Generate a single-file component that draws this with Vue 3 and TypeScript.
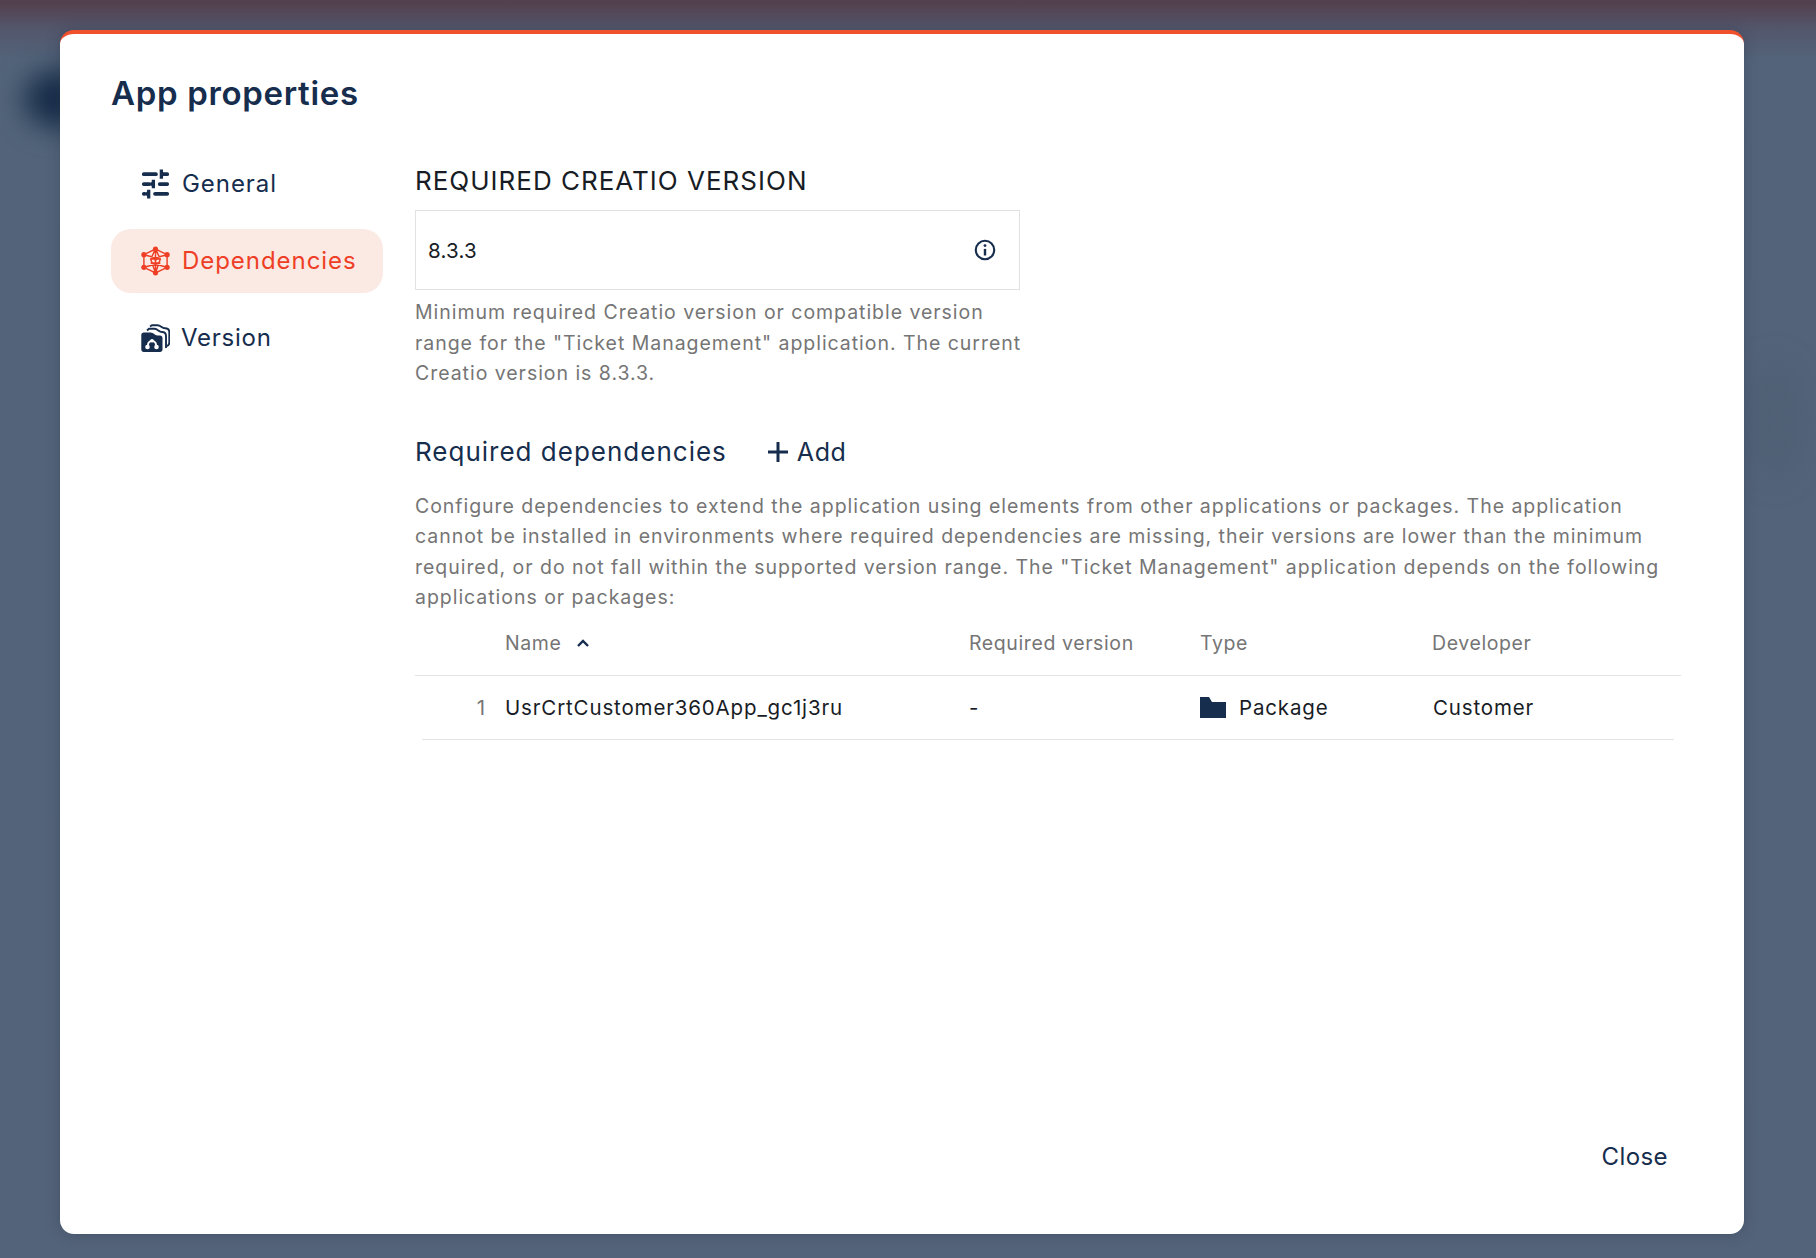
<script setup lang="ts">
interface Row { num: number; name: string; version: string; type: string; developer: string }
const rows: Row[] = [{ num: 1, name: 'UsrCrtCustomer360App_gc1j3ru', version: '-', type: 'Package', developer: 'Customer' }]
</script>

<template>
  <div class="page">
    <div class="blob"></div>
    <div class="blob2"></div>
    <section class="modal">
      <h1 class="title">App properties</h1>
      <div class="body">
        <nav class="nav">
          <a class="nav-item">
            <svg class="nav-icon" viewBox="0 0 29 32" fill="none" stroke="#162d4d" stroke-width="4" stroke-linecap="round">
              <path d="M2 5.500H15M24 5.500H27M2 16H8M19 16H27M2 26.500H3M14 26.500H27" />
              <path d="M19 0.500H22.500V3L25 5.500L22.500 8V10.500H19ZM14 11.500H10.500V13.500L8 16L10.500 18.500V20.500H14ZM9 22H5.500V24L3 26.500L5.500 29V31.500H9Z" fill="#162d4d" stroke="none" />
            </svg>
            <span class="nav-label">General</span>
          </a>
          <a class="nav-item active">
            <svg class="nav-icon" viewBox="0 0 30 30" fill="none" stroke="#ee3f26" stroke-width="1.500">
              <path d="M15 2.600L10 13L15 27.400L20 13ZM3 8.500L20 13M27 8.500L10 13M3 21.500L20 17M27 21.500L10 17M15 2.600V27.400M10 13H20M10 17H20M3 8.500L15 2.600L27 8.500V21.500L15 27.400L3 21.500Z" />
              <g fill="#ee3f26" stroke="none">
                <circle cx="15" cy="2.800" r="2.700" /><circle cx="27" cy="8.500" r="2.700" /><circle cx="27" cy="21.500" r="2.700" />
                <circle cx="15" cy="27.200" r="2.700" /><circle cx="3" cy="21.500" r="2.700" /><circle cx="3" cy="8.500" r="2.700" />
                <circle cx="15" cy="13" r="1.700" />
              </g>
            </svg>
            <span class="nav-label">Dependencies</span>
          </a>
          <a class="nav-item">
            <svg class="nav-icon" viewBox="0 0 29 28" fill="none">
              <path d="M9 2.500L11 1.200H16.500C20 1.200 20.500 4.200 24 4.200C27 4.200 28.300 5.500 28.300 8V18.500C28.300 20.500 27.500 21.500 26 22" stroke="#162d4d" stroke-width="1.900" />
              <path d="M6 6.500L8 4.800H13.500C17 4.800 17.500 8 21 8C23.800 8 25 9.500 25 12V24" stroke="#162d4d" stroke-width="1.900" />
              <path d="M0.300 11C0.300 9.500 1.300 8.500 2.800 8.500H9.500C13 8.500 13.500 11.500 16.500 11.500H19C20.500 11.500 21.500 12.500 21.500 14V25.500C21.500 27 20.500 28 19 28H2.800C1.300 28 0.300 27 0.300 25.500Z" fill="#162d4d" />
              <path d="M7 21A4 4 0 0 1 15 21" stroke="#fff" stroke-width="2" />
              <circle cx="6.500" cy="23" r="2.300" fill="#fff" /><circle cx="15.500" cy="23" r="2.300" fill="#fff" />
              <circle cx="11" cy="16.800" r="1.800" fill="#fff" />
            </svg>
            <span class="nav-label version-label">Version</span>
          </a>
        </nav>

        <main class="content">
          <h2 class="req-title">REQUIRED CREATIO VERSION</h2>
          <div class="field">
            <span class="field-value">8.3.3</span>
            <svg class="info" viewBox="0 0 20 20" fill="none" stroke="#162d4d">
              <circle cx="10" cy="10" r="8.400" stroke-width="1.900" />
              <path d="M10 9V15" stroke-width="2.200" />
              <circle cx="10" cy="6" r="1.300" fill="#162d4d" stroke="none" />
            </svg>
          </div>
          <p class="hint hint-narrow">Minimum required Creatio version or compatible version<br />range for the "Ticket Management" application. The current<br />Creatio version is 8.3.3.</p>

          <div class="dep-head">
            <h3 class="dep-title">Required dependencies</h3>
            <button class="add">
              <svg class="plus" viewBox="0 0 20 20" stroke="#162d4d" stroke-width="3"><path d="M10 0V20M0 10H20" /></svg>
              <span>Add</span>
            </button>
          </div>
          <p class="hint hint-wide">Configure dependencies to extend the application using elements from other applications or packages. The application<br />cannot be installed in environments where required dependencies are missing, their versions are lower than the minimum<br />required, or do not fall within the supported version range. The "Ticket Management" application depends on the following<br />applications or packages:</p>

          <div class="table">
            <div class="thead grid">
              <span></span>
              <span class="name-head">Name
                <svg class="sort" viewBox="0 0 12 8" fill="none" stroke="#162d4d" stroke-width="2.400"><path d="M1 7L6 2L11 7" /></svg>
              </span>
              <span>Required version</span>
              <span>Type</span>
              <span>Developer</span>
            </div>
            <div v-for="r in rows" :key="r.num" class="trow grid">
              <span class="num">{{ r.num }}</span>
              <span>{{ r.name }}</span>
              <span>{{ r.version }}</span>
              <span class="type">
                <svg class="folder" viewBox="0 0 26 21"><path d="M0 0H9L12 5H26V21H0Z" fill="#162d4d" /></svg>
                {{ r.type }}
              </span>
              <span>{{ r.developer }}</span>
            </div>
          </div>
        </main>
      </div>
      <footer class="footer"><button class="close">Close</button></footer>
    </section>
  </div>
</template>

<style>
html, body { margin: 0; background: #536379; }
</style>

<style scoped>
.page {
  position: relative;
  width: 1816px;
  height: 1258px;
  box-sizing: border-box;
  padding: 30px 72px 24px 60px;
  overflow: hidden;
  background: linear-gradient(180deg, #54414f 0, #54414f 4px, #53566b 28px, #53647a 60px, #536379 100%);
  font-family: Inter, "Open Sans", sans-serif;
  color: #162d4d;
}
.blob {
  position: absolute;
  left: 24px;
  top: 70px;
  width: 70px;
  height: 58px;
  border-radius: 50%;
  background: #162c48;
  filter: blur(14px);
}
.blob2 {
  position: absolute;
  left: 1750px;
  top: 360px;
  width: 50px;
  height: 120px;
  border-radius: 50%;
  background: rgba(60, 75, 95, 0.18);
  filter: blur(16px);
}
.modal {
  position: relative;
  display: flex;
  flex-direction: column;
  height: 100%;
  box-sizing: border-box;
  background: #fff;
  border-top: 4px solid #f0512d;
  border-radius: 14px;
  box-shadow: 0 0 14px rgba(40, 50, 70, 0.35);
  padding: 0 66px 0 51px;
}
.title {
  margin: 40px 0 0;
  font-size: 33px;
  line-height: 38px;
  font-weight: 600;
  letter-spacing: 0.67px;
}
.body { display: flex; flex: 1; margin-top: 38px; min-height: 0; }
.nav { width: 272px; margin-right: 32px; display: flex; flex-direction: column; gap: 13px; padding-top: 2px; flex: none; }
.nav-item {
  display: flex;
  align-items: center;
  gap: 12px;
  height: 64px;
  padding-left: 30px;
  border-radius: 20px;
  font-size: 24px;
  letter-spacing: 0.95px;
}
.nav-item.active { background: #fbe9e4; color: #ee3f26; }
.nav-icon { width: 29px; height: 30px; flex: none; }
.nav-label { margin-bottom: 2px; }
.version-label { margin-left: -1px; letter-spacing: 0.75px; }
.content { flex: 1; min-width: 0; padding-top: 16px; }
.req-title { margin: 0; font-size: 26px; line-height: 30px; font-weight: 400; color: #181c25; letter-spacing: 1px; white-space: nowrap; }
.field {
  display: flex;
  align-items: center;
  justify-content: space-between;
  box-sizing: border-box;
  width: 605px;
  height: 80px;
  margin-top: 14px;
  padding: 0 23px 0 12px;
  border: 1px solid #e2e2e2;
  font-size: 20.500px;
  letter-spacing: 0.2px;
  color: #181c25;
}
.info { width: 22px; height: 22px; }
.hint { margin: 0; font-size: 19.500px; line-height: 30.500px; color: #757575; letter-spacing: 0.96px; white-space: nowrap; }
.hint-narrow { margin-top: 7px; }
.dep-head { display: flex; align-items: center; gap: 41px; margin-top: 47px; }
.dep-title { margin: 0; font-size: 26px; line-height: 32px; font-weight: 400; letter-spacing: 1px; }
.add { display: flex; align-items: center; gap: 9px; border: 0; background: none; padding: 0; font: inherit; font-size: 25px; letter-spacing: 0.6px; color: inherit; }
.plus { width: 20px; height: 20px; }
.hint-wide { margin-top: 23px; }
.table { width: 1266px; }
.grid { display: grid; grid-template-columns: 90px 464px 231px 232px 1fr; align-items: center; }
.thead { height: 60px; padding-bottom: 2px; border-bottom: 1px solid #e4e4e4; font-size: 19.500px; color: #757575; letter-spacing: 0.6px; }
.name-head { display: flex; align-items: center; gap: 15px; }
.sort { width: 12px; height: 8px; }
.trow { height: 63px; margin: 0 7px; border-bottom: 1px solid #e4e4e4; font-size: 20.500px; color: #181c25; grid-template-columns: 83px 464px 231px 233px 1fr; letter-spacing: 0.85px; }
.num { color: #757575; text-align: right; padding-right: 19px; }
.type { display: flex; align-items: center; gap: 13px; }
.folder { width: 26px; height: 21px; }
.footer { display: flex; justify-content: flex-end; padding: 0 10px 63px 0; }
.close { border: 0; background: none; padding: 0; font: inherit; font-size: 24px; color: inherit; letter-spacing: 0.4px; }
</style>
